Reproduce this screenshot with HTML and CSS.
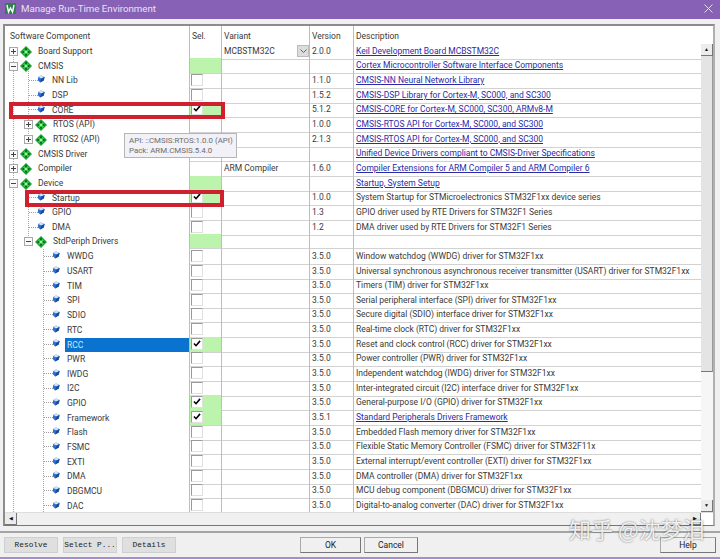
FILE: index.html
```html
<!DOCTYPE html>
<html lang="en">

<head>
    <meta charset="UTF-8">
    <title>Manage Run-Time Environment</title>
    <link rel="stylesheet" href="styles.css">
</head>

<body>

    <svg class="defs" width="0" height="0">
        <symbol id="bundle" viewBox="0 0 13 13">
            <path d="M6.5 0 13 6.5 6.5 13 0 6.5Z" fill="#12a12c" />
            <path d="M6.5 1.5 11.5 6.5 6.5 11.5 1.5 6.5Z" fill="#35c94a" />
            <circle cx="6.5" cy="3.4" r="1.1" fill="#0a5a18" />
            <circle cx="6.5" cy="9.6" r="1.1" fill="#0a5a18" />
            <circle cx="3.4" cy="6.5" r="1.1" fill="#0a5a18" />
            <circle cx="9.6" cy="6.5" r="1.1" fill="#0a5a18" />
            <circle cx="6.5" cy="6.5" r="1.2" fill="#c8f5cc" />
        </symbol>
        <symbol id="gem" viewBox="0 0 10 10">
            <path d="M5 .5 9.5 2.5 8.5 7 4 9.5 1 6.5 1.5 2.5Z" fill="#2f6fd0" />
            <path d="M1.5 2.5 5 .5 9.5 2.5 5.5 4.5Z" fill="#cfe4fb" />
            <path d="M5.5 4.5 9.5 2.5 8.5 7 4 9.5Z" fill="#174a9e" />
        </symbol>
        <symbol id="tick" viewBox="0 0 9 8">
            <path d="M1 4 3.4 6.5 8 1" fill="none" stroke="#000" stroke-width="1.8" />
        </symbol>
    </svg>

    <div class="titlebar">
        <svg class="app-icon" width="11" height="11" viewBox="0 0 11 11">
            <rect width="11" height="11" fill="#2f7f4f" />
            <path d="M2 2 3.5 9 5.5 5 7.5 9 9 2" fill="none" stroke="#fff" stroke-width="1.4" />
        </svg>
        <span class="title">Manage Run-Time Environment</span>
        <svg class="close" width="9" height="9" viewBox="0 0 9 9">
            <path d="M.5 .5 8.5 8.5M8.5 .5 .5 8.5" stroke="#e6daf3" stroke-width="1" />
        </svg>
    </div>

    <div class="panel">
        <div class="head">
            <div class="cell comp">Software Component</div>
            <div class="cell sel">Sel.</div>
            <div class="cell var">Variant</div>
            <div class="cell ver">Version</div>
            <div class="cell desc">Description</div>
        </div>

        <div class="middle">
            <div class="tree">
                <span class="guide g0"></span>
                <span class="guide g1a"></span>
                <span class="guide g1b"></span>
                <span class="guide g2"></span>

                <div class="row">
                    <div class="cell comp l0"><i class="exp plus"></i><svg class="ico"><use href="#bundle" /></svg>Board Support</div>
                    <div class="cell sel"></div>
                    <div class="cell var">MCBSTM32C<span class="drop"><svg width="7" height="4" viewBox="0 0 7 4"><path d="M.5 .5 3.5 3.5 6.5 .5" fill="none" stroke="#666" /></svg></span></div>
                    <div class="cell ver">2.0.0</div>
                    <div class="cell desc"><a href="#">Keil Development Board MCBSTM32C</a></div>
                </div>
                <div class="row">
                    <div class="cell comp l0"><i class="exp minus"></i><svg class="ico"><use href="#bundle" /></svg>CMSIS</div>
                    <div class="cell sel on"></div>
                    <div class="cell var"></div>
                    <div class="cell ver"></div>
                    <div class="cell desc"><a href="#">Cortex Microcontroller Software Interface Components</a></div>
                </div>
                <div class="row">
                    <div class="cell comp l1 leaf"><i class="exp none"></i><svg class="ico gem"><use href="#gem" /></svg>NN Lib</div>
                    <div class="cell sel"><i class="box"></i></div>
                    <div class="cell var"></div>
                    <div class="cell ver">1.1.0</div>
                    <div class="cell desc"><a href="#">CMSIS-NN Neural Network Library</a></div>
                </div>
                <div class="row">
                    <div class="cell comp l1 leaf"><i class="exp none"></i><svg class="ico gem"><use href="#gem" /></svg>DSP</div>
                    <div class="cell sel"><i class="box"></i></div>
                    <div class="cell var"></div>
                    <div class="cell ver">1.5.2</div>
                    <div class="cell desc"><a href="#">CMSIS-DSP Library for Cortex-M, SC000, and SC300</a></div>
                </div>
                <div class="row">
                    <div class="cell comp l1 leaf"><i class="exp none"></i><svg class="ico gem"><use href="#gem" /></svg>CORE</div>
                    <div class="cell sel on"><i class="box"><svg><use href="#tick" /></svg></i></div>
                    <div class="cell var"></div>
                    <div class="cell ver">5.1.2</div>
                    <div class="cell desc"><a href="#">CMSIS-CORE for Cortex-M, SC000, SC300, ARMv8-M</a></div>
                </div>
                <div class="row">
                    <div class="cell comp l1"><i class="exp plus"></i><svg class="ico"><use href="#bundle" /></svg>RTOS (API)</div>
                    <div class="cell sel"></div>
                    <div class="cell var"></div>
                    <div class="cell ver">1.0.0</div>
                    <div class="cell desc"><a href="#">CMSIS-RTOS API for Cortex-M, SC000, and SC300</a></div>
                </div>
                <div class="row">
                    <div class="cell comp l1"><i class="exp plus"></i><svg class="ico"><use href="#bundle" /></svg>RTOS2 (API)</div>
                    <div class="cell sel"></div>
                    <div class="cell var"></div>
                    <div class="cell ver">2.1.3</div>
                    <div class="cell desc"><a href="#">CMSIS-RTOS API for Cortex-M, SC000, and SC300</a></div>
                </div>
                <div class="row">
                    <div class="cell comp l0"><i class="exp plus"></i><svg class="ico"><use href="#bundle" /></svg>CMSIS Driver</div>
                    <div class="cell sel"></div>
                    <div class="cell var"></div>
                    <div class="cell ver"></div>
                    <div class="cell desc"><a href="#">Unified Device Drivers compliant to CMSIS-Driver Specifications</a></div>
                </div>
                <div class="row">
                    <div class="cell comp l0"><i class="exp plus"></i><svg class="ico"><use href="#bundle" /></svg>Compiler</div>
                    <div class="cell sel"></div>
                    <div class="cell var">ARM Compiler</div>
                    <div class="cell ver">1.6.0</div>
                    <div class="cell desc"><a href="#">Compiler Extensions for ARM Compiler 5 and ARM Compiler 6</a></div>
                </div>
                <div class="row">
                    <div class="cell comp l0"><i class="exp minus"></i><svg class="ico"><use href="#bundle" /></svg>Device</div>
                    <div class="cell sel on"></div>
                    <div class="cell var"></div>
                    <div class="cell ver"></div>
                    <div class="cell desc"><a href="#">Startup, System Setup</a></div>
                </div>
                <div class="row">
                    <div class="cell comp l1 leaf"><i class="exp none"></i><svg class="ico gem"><use href="#gem" /></svg>Startup</div>
                    <div class="cell sel on"><i class="box"><svg><use href="#tick" /></svg></i></div>
                    <div class="cell var"></div>
                    <div class="cell ver">1.0.0</div>
                    <div class="cell desc">System Startup for STMicroelectronics STM32F1xx device series</div>
                </div>
                <div class="row">
                    <div class="cell comp l1 leaf"><i class="exp none"></i><svg class="ico gem"><use href="#gem" /></svg>GPIO</div>
                    <div class="cell sel"><i class="box"></i></div>
                    <div class="cell var"></div>
                    <div class="cell ver">1.3</div>
                    <div class="cell desc">GPIO driver used by RTE Drivers for STM32F1 Series</div>
                </div>
                <div class="row">
                    <div class="cell comp l1 leaf"><i class="exp none"></i><svg class="ico gem"><use href="#gem" /></svg>DMA</div>
                    <div class="cell sel"><i class="box"></i></div>
                    <div class="cell var"></div>
                    <div class="cell ver">1.2</div>
                    <div class="cell desc">DMA driver used by RTE Drivers for STM32F1 Series</div>
                </div>
                <div class="row">
                    <div class="cell comp l1"><i class="exp minus"></i><svg class="ico"><use href="#bundle" /></svg>StdPeriph Drivers</div>
                    <div class="cell sel on"></div>
                    <div class="cell var"></div>
                    <div class="cell ver"></div>
                    <div class="cell desc"></div>
                </div>
                <div class="row">
                    <div class="cell comp l2 leaf"><i class="exp none"></i><svg class="ico gem"><use href="#gem" /></svg>WWDG</div>
                    <div class="cell sel"><i class="box"></i></div>
                    <div class="cell var"></div>
                    <div class="cell ver">3.5.0</div>
                    <div class="cell desc">Window watchdog (WWDG) driver for STM32F1xx</div>
                </div>
                <div class="row">
                    <div class="cell comp l2 leaf"><i class="exp none"></i><svg class="ico gem"><use href="#gem" /></svg>USART</div>
                    <div class="cell sel"><i class="box"></i></div>
                    <div class="cell var"></div>
                    <div class="cell ver">3.5.0</div>
                    <div class="cell desc">Universal synchronous asynchronous receiver transmitter (USART) driver for STM32F1xx</div>
                </div>
                <div class="row">
                    <div class="cell comp l2 leaf"><i class="exp none"></i><svg class="ico gem"><use href="#gem" /></svg>TIM</div>
                    <div class="cell sel"><i class="box"></i></div>
                    <div class="cell var"></div>
                    <div class="cell ver">3.5.0</div>
                    <div class="cell desc">Timers (TIM) driver for STM32F1xx</div>
                </div>
                <div class="row">
                    <div class="cell comp l2 leaf"><i class="exp none"></i><svg class="ico gem"><use href="#gem" /></svg>SPI</div>
                    <div class="cell sel"><i class="box"></i></div>
                    <div class="cell var"></div>
                    <div class="cell ver">3.5.0</div>
                    <div class="cell desc">Serial peripheral interface (SPI) driver for STM32F1xx</div>
                </div>
                <div class="row">
                    <div class="cell comp l2 leaf"><i class="exp none"></i><svg class="ico gem"><use href="#gem" /></svg>SDIO</div>
                    <div class="cell sel"><i class="box"></i></div>
                    <div class="cell var"></div>
                    <div class="cell ver">3.5.0</div>
                    <div class="cell desc">Secure digital (SDIO) interface driver for STM32F1xx</div>
                </div>
                <div class="row">
                    <div class="cell comp l2 leaf"><i class="exp none"></i><svg class="ico gem"><use href="#gem" /></svg>RTC</div>
                    <div class="cell sel"><i class="box"></i></div>
                    <div class="cell var"></div>
                    <div class="cell ver">3.5.0</div>
                    <div class="cell desc">Real-time clock (RTC) driver for STM32F1xx</div>
                </div>
                <div class="row">
                    <div class="cell comp l2 leaf"><i class="exp none"></i><svg class="ico gem"><use href="#gem" /></svg><span class="picked">RCC</span></div>
                    <div class="cell sel on"><i class="box"><svg><use href="#tick" /></svg></i></div>
                    <div class="cell var"></div>
                    <div class="cell ver">3.5.0</div>
                    <div class="cell desc">Reset and clock control (RCC) driver for STM32F1xx</div>
                </div>
                <div class="row">
                    <div class="cell comp l2 leaf"><i class="exp none"></i><svg class="ico gem"><use href="#gem" /></svg>PWR</div>
                    <div class="cell sel"><i class="box"></i></div>
                    <div class="cell var"></div>
                    <div class="cell ver">3.5.0</div>
                    <div class="cell desc">Power controller (PWR) driver for STM32F1xx</div>
                </div>
                <div class="row">
                    <div class="cell comp l2 leaf"><i class="exp none"></i><svg class="ico gem"><use href="#gem" /></svg>IWDG</div>
                    <div class="cell sel"><i class="box"></i></div>
                    <div class="cell var"></div>
                    <div class="cell ver">3.5.0</div>
                    <div class="cell desc">Independent watchdog (IWDG) driver for STM32F1xx</div>
                </div>
                <div class="row">
                    <div class="cell comp l2 leaf"><i class="exp none"></i><svg class="ico gem"><use href="#gem" /></svg>I2C</div>
                    <div class="cell sel"><i class="box"></i></div>
                    <div class="cell var"></div>
                    <div class="cell ver">3.5.0</div>
                    <div class="cell desc">Inter-integrated circuit (I2C) interface driver for STM32F1xx</div>
                </div>
                <div class="row">
                    <div class="cell comp l2 leaf"><i class="exp none"></i><svg class="ico gem"><use href="#gem" /></svg>GPIO</div>
                    <div class="cell sel on"><i class="box"><svg><use href="#tick" /></svg></i></div>
                    <div class="cell var"></div>
                    <div class="cell ver">3.5.0</div>
                    <div class="cell desc">General-purpose I/O (GPIO) driver for STM32F1xx</div>
                </div>
                <div class="row">
                    <div class="cell comp l2 leaf"><i class="exp none"></i><svg class="ico gem"><use href="#gem" /></svg>Framework</div>
                    <div class="cell sel on"><i class="box"><svg><use href="#tick" /></svg></i></div>
                    <div class="cell var"></div>
                    <div class="cell ver">3.5.1</div>
                    <div class="cell desc"><a href="#">Standard Peripherals Drivers Framework</a></div>
                </div>
                <div class="row">
                    <div class="cell comp l2 leaf"><i class="exp none"></i><svg class="ico gem"><use href="#gem" /></svg>Flash</div>
                    <div class="cell sel"><i class="box"></i></div>
                    <div class="cell var"></div>
                    <div class="cell ver">3.5.0</div>
                    <div class="cell desc">Embedded Flash memory driver for STM32F1xx</div>
                </div>
                <div class="row">
                    <div class="cell comp l2 leaf"><i class="exp none"></i><svg class="ico gem"><use href="#gem" /></svg>FSMC</div>
                    <div class="cell sel"><i class="box"></i></div>
                    <div class="cell var"></div>
                    <div class="cell ver">3.5.0</div>
                    <div class="cell desc">Flexible Static Memory Controller (FSMC) driver for STM32F11x</div>
                </div>
                <div class="row">
                    <div class="cell comp l2 leaf"><i class="exp none"></i><svg class="ico gem"><use href="#gem" /></svg>EXTI</div>
                    <div class="cell sel"><i class="box"></i></div>
                    <div class="cell var"></div>
                    <div class="cell ver">3.5.0</div>
                    <div class="cell desc">External interrupt/event controller (EXTI) driver for STM32F1xx</div>
                </div>
                <div class="row">
                    <div class="cell comp l2 leaf"><i class="exp none"></i><svg class="ico gem"><use href="#gem" /></svg>DMA</div>
                    <div class="cell sel"><i class="box"></i></div>
                    <div class="cell var"></div>
                    <div class="cell ver">3.5.0</div>
                    <div class="cell desc">DMA controller (DMA) driver for STM32F1xx</div>
                </div>
                <div class="row">
                    <div class="cell comp l2 leaf"><i class="exp none"></i><svg class="ico gem"><use href="#gem" /></svg>DBGMCU</div>
                    <div class="cell sel"><i class="box"></i></div>
                    <div class="cell var"></div>
                    <div class="cell ver">3.5.0</div>
                    <div class="cell desc">MCU debug component (DBGMCU) driver for STM32F1xx</div>
                </div>
                <div class="row">
                    <div class="cell comp l2 leaf"><i class="exp none"></i><svg class="ico gem"><use href="#gem" /></svg>DAC</div>
                    <div class="cell sel"><i class="box"></i></div>
                    <div class="cell var"></div>
                    <div class="cell ver">3.5.0</div>
                    <div class="cell desc">Digital-to-analog converter (DAC) driver for STM32F1xx</div>
                </div>
            </div>

            <div class="vscroll">
                <div class="sbtn">&#9650;</div>
                <div class="thumb"></div>
                <div class="track"></div>
                <div class="sbtn">&#9660;</div>
            </div>
        </div>

        <div class="hscroll">
            <div class="sbtn">&#9664;</div>
            <div class="htrack"></div>
            <div class="sbtn">&#9654;</div>
            <div class="corner"></div>
        </div>
    </div>

    <div class="footer">
        <button class="btn mono">Resolve</button>
        <button class="btn mono">Select P...</button>
        <button class="btn mono">Details</button>
        <button class="btn main first">OK</button>
        <button class="btn main cancel">Cancel</button>
        <button class="btn main help">Help</button>
    </div>

    <div class="redbox box-core"></div>
    <div class="redbox box-startup"></div>

    <div class="tooltip">API: ::CMSIS:RTOS:1.0.0 (API)<br>Pack: ARM.CMSIS.5.4.0</div>

    <div class="watermark">知乎 @沈梦泪</div>

</body>

</html>
```

FILE: styles.css
```css
body {
    font-family: Roboto, Arial, sans-serif;
    font-size: 8.5px;
    color: #3a3a3a;
    margin: 0;
    width: 720px;
    height: 559px;
    overflow: hidden;
    position: relative;
    display: flex;
    flex-direction: column;
    background-color: #f0f0f0;
    border-bottom: 2px solid #a58fc9;
    box-sizing: border-box;
}

.defs {
    position: absolute;
}

/* Title bar */
.titlebar {
    height: 19px;
    flex: none;
    display: flex;
    align-items: center;
    box-sizing: border-box;
    padding: 0 7px 3px 5px;
    background-color: #8661b5;
    color: #e9e0f5;
    font-size: 9.7px;
}

.app-icon {
    margin-right: 5px;
}

.close {
    margin-left: auto;
}

/* Main panel */
.panel {
    margin: 5px 5px 0 3px;
    height: 502px;
    flex: none;
    background-color: #fff;
    border: 2px solid #8c8c8c;
    border-right-color: #b0b0b0;
    border-bottom: 1px solid #777;
    box-sizing: border-box;
    display: flex;
    flex-direction: column;
}

.head,
.row {
    display: grid;
    grid-template-columns: 184px 32px 88px 44px 1fr;
}

.head {
    height: 17.67px;
    flex: none;
    padding-right: 12px;
}

.head .cell {
    line-height: 20px;
}

.middle {
    flex: 1;
    min-height: 0;
    display: flex;
}

.tree {
    flex: 1;
    position: relative;
    overflow: hidden;
}

.row {
    height: 14.67px;
}

.cell {
    border-left: 1px solid #bdbdbd;
    padding-left: 2px;
    line-height: 15px;
    white-space: nowrap;
    position: relative;
}

.comp {
    border-left: none;
    display: flex;
    align-items: center;
}

.row .sel,
.row .var,
.row .ver,
.row .desc {
    border-bottom: 1px solid #d2d2d2;
}

.row .sel {
    padding-left: 1px;
}

.head .comp {
    padding-left: 5px;
}

.sel.on {
    background-color: #bcf4ae;
}

a {
    color: #2b2ba8;
}

/* Tree column */
.l0 {
    padding-left: 4px;
}

.l1 {
    padding-left: 19px;
}

.l2 {
    padding-left: 34px;
}

.exp {
    width: 9px;
    height: 9px;
    flex: none;
    box-sizing: border-box;
    border: 1px solid #a8a8a8;
    background-color: #fafafa;
    position: relative;
    z-index: 1;
}

.exp.none {
    border: none;
    background: none;
}

.exp.plus::before,
.exp.minus::before {
    content: "";
    position: absolute;
    left: 1px;
    right: 1px;
    top: 3px;
    height: 1px;
    background-color: #444;
}

.exp.plus::after {
    content: "";
    position: absolute;
    top: 1px;
    bottom: 1px;
    left: 3px;
    width: 1px;
    background-color: #444;
}

.ico {
    width: 12px;
    height: 12px;
    flex: none;
    margin: 0 6px 0 2px;
    position: relative;
    z-index: 1;
}

.ico.gem {
    width: 8px;
    height: 8px;
    margin: -3px 7px 0 4px;
}

.leaf::before {
    content: "";
    position: absolute;
    top: 7px;
    width: 9px;
    border-top: 1px dotted #a0a0a0;
}

.l1.leaf::before {
    left: 24px;
}

.l2.leaf::before {
    left: 39px;
}

.guide {
    position: absolute;
    border-left: 1px dotted #a8a8a8;
}

.g0 {
    left: 8px;
    top: 7px;
    bottom: 0;
}

.g1a {
    left: 23px;
    top: 22px;
    height: 74px;
}

.g1b {
    left: 23px;
    top: 146px;
    height: 52px;
}

.g2 {
    left: 38px;
    top: 205px;
    bottom: 0;
}

.picked {
    flex: 1;
    margin-left: -2px;
    padding-left: 2px;
    line-height: 14px;
    color: #cfe4fb;
    background-color: #0a72cf;
}

/* Check boxes */
.box {
    display: block;
    width: 12px;
    height: 12px;
    box-sizing: border-box;
    margin-top: 1px;
    border: 1px solid #9a9a9a;
    border-right-color: #e0e0e0;
    border-bottom-color: #e0e0e0;
    background-color: #fff;
}

.box svg {
    display: block;
    width: 8px;
    height: 7px;
    margin: 1px 0 0 1px;
}

/* Variant drop down */
.var .drop {
    position: absolute;
    right: 0;
    top: 1px;
    width: 12px;
    height: 12px;
    background-color: #dcdcdc;
    border: 1px solid #bbb;
    box-sizing: border-box;
    display: flex;
    align-items: center;
    justify-content: center;
}

/* Scroll bars */
.vscroll {
    width: 12px;
    flex: none;
    display: flex;
    flex-direction: column;
    background-color: #f6f6f6;
}

.sbtn {
    flex: none;
    height: 12px;
    width: 12px;
    background-color: #ececec;
    border-right: 1px solid #777;
    border-bottom: 1px solid #777;
    box-sizing: border-box;
    color: #111;
    font-size: 5px;
    line-height: 11px;
    text-align: center;
}

.thumb {
    height: 316px;
    flex: none;
    background-color: #e4e4e4;
    border-right: 1px solid #999;
    border-bottom: 1px solid #777;
    box-sizing: border-box;
}

.track {
    flex: 1;
}

.hscroll {
    height: 12px;
    flex: none;
    display: flex;
    background-color: #f0f0f0;
    border-top: 1px solid #ddd;
}

.htrack {
    flex: 1;
}

.corner {
    width: 12px;
    flex: none;
    background-color: #fff;
}

/* Bottom buttons */
.footer {
    flex: none;
    margin-top: 5px;
    padding: 4px 4px 0;
    border-top: 2px solid #a4a4a4;
    display: flex;
    gap: 5px;
}

.btn {
    height: 16px;
    margin: 0;
    padding: 0;
    border: 1px solid #adadad;
    background-color: #e1e1e1;
    color: #222;
    font-family: Roboto, Arial, sans-serif;
    font-size: 8.5px;
    white-space: nowrap;
}

.mono {
    width: 54px;
    background-color: #dfdfdf;
    border-color: #cfcfcf;
    font-family: "Liberation Mono", monospace;
    font-size: 7.8px;
}

.main {
    width: 54px;
    border-color: #777;
    border-top-color: #aaa;
    border-left-color: #aaa;
    background-color: #f0f0f0;
}

.first {
    margin-left: 119px;
    width: 61px;
}

.cancel {
    margin-left: -2px;
}

.help {
    margin-left: auto;
    width: 56px;
}

/* Annotations on top of the shot */
.redbox {
    position: absolute;
    border: 4px solid #cf2030;
    box-sizing: border-box;
}

.box-core {
    left: 9px;
    top: 102px;
    width: 216px;
    height: 17px;
}

.box-startup {
    left: 25px;
    top: 190px;
    width: 199px;
    height: 17px;
}

.tooltip {
    position: absolute;
    left: 124px;
    top: 133px;
    width: 113px;
    height: 25px;
    box-sizing: border-box;
    padding: 2px 4px;
    border: 1px solid #b5b5b5;
    background-color: #f1f1f7;
    color: #6d6d6d;
    font-size: 7.9px;
    line-height: 10px;
    white-space: nowrap;
}

.watermark {
    position: absolute;
    left: 569px;
    top: 514px;
    color: rgba(255, 255, 255, 0.9);
    font-family: "Noto Sans CJK SC", sans-serif;
    font-size: 22px;
    line-height: 28px;
    text-shadow: 0 0 2px rgba(0, 0, 0, 0.6);
    white-space: nowrap;
}
```
